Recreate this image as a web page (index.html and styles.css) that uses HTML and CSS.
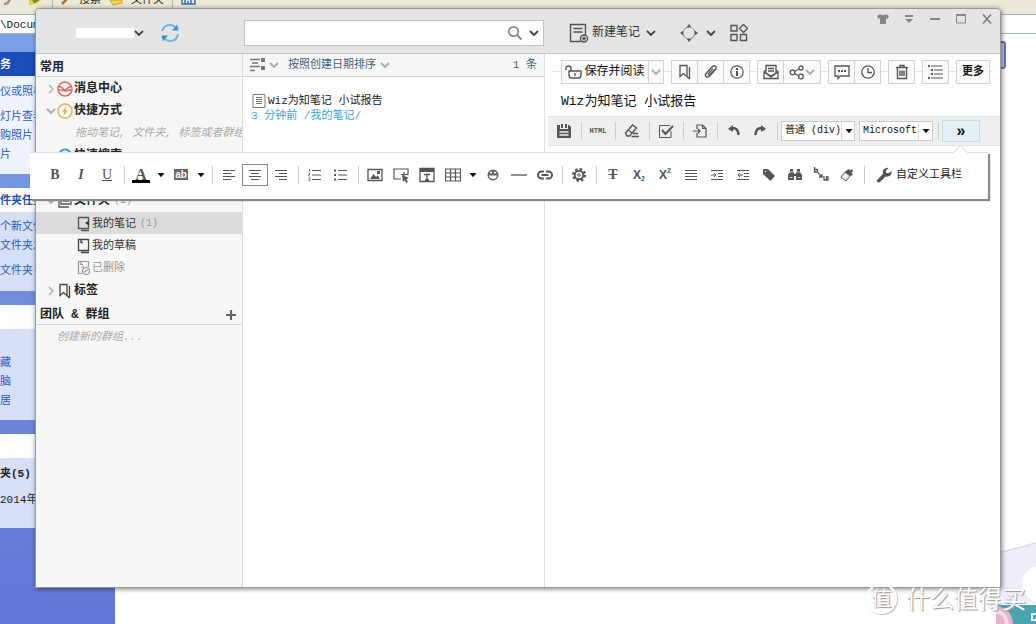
FILE: index.html
```html
<!DOCTYPE html>
<html lang="zh-CN">
<head>
<meta charset="utf-8">
<title>为知笔记</title>
<link rel="stylesheet" href="styles.css">
</head>
<body>
<svg class="defs" aria-hidden="true">
  <defs>
    <symbol id="chev" viewBox="0 0 10 10"><path d="M1 3l4 4 4-4" fill="none" stroke="currentColor" stroke-width="1.8"/></symbol>
    <symbol id="chev-r" viewBox="0 0 10 10"><path d="M3 1l4 4-4 4" fill="none" stroke="currentColor" stroke-width="1.4"/></symbol>
    <symbol id="caret" viewBox="0 0 8 8"><path d="M0.5 2h7L4 6.200z"/></symbol>
    <symbol id="bookmark" viewBox="0 0 16 16"><path d="M3 1.500h7v11L6.500 9.500 3 12.500zM12.500 3v12M10 12.500l2.500 2.500" fill="none" stroke="currentColor" stroke-width="1.300"/></symbol>
    <symbol id="list" viewBox="0 0 14 12"><path d="M4 1.500h9M4 6h9M4 10.500h9" stroke="currentColor"/><path d="M0 .500h2v2H0zM0 5h2v2H0zM0 9.500h2v2H0z"/></symbol>
    <symbol id="numlist" viewBox="0 0 14 12"><path d="M4 1.500h9M4 6h9M4 10.500h9" stroke="currentColor"/><path d="M1.500 0v3M.500 4.500h1.500L.500 7H2M.500 9H2v2.500H.500" fill="none" stroke="currentColor" stroke-width=".8"/></symbol>
  </defs>
</svg>

<div class="explorer">
  <div class="ex-tools">
    <svg width="16" height="14" viewBox="0 0 16 14"><path d="M0 4Q5 4 6 -2" fill="none" stroke="#999" stroke-width="2.500"/></svg>
    <svg width="16" height="14" viewBox="0 0 16 14"><path d="M1 0h13L4 5H1z" fill="#e8c83c"/><path d="M5 0l2 2 4-3" fill="none" stroke="#4c9a2c" stroke-width="2"/></svg>
    <i class="ex-sep"></i>
    <svg width="10" height="14" viewBox="0 0 10 14"><path d="M1 4l6-6" stroke="#b0714c" stroke-width="2.500"/></svg>
    <span>搜索</span>
    <svg width="14" height="14" viewBox="0 0 14 14"><path d="M1 0h12v3L4 5z" fill="#f2d65c" stroke="#c9a227"/></svg>
    <span>文件夹</span>
    <i class="ex-sep"></i>
    <svg width="16" height="14" viewBox="0 0 16 14"><path d="M1 -3h13v7H1zM4 0v4M7 1v3M10 0v4" fill="#e7f0ff" stroke="#3b6cc4" stroke-width="1.500"/></svg>
  </div>
  <div class="ex-address">\Documents</div>
  <div class="ex-main">
    <div class="pane">
      <section class="card first">
        <h2>务</h2>
        <div class="card-body"><a href="#">仪或照相</a><a href="#">灯片查看</a><a href="#">购照片</a><a href="#">片</a></div>
      </section>
      <section class="card tasks">
        <h2>件夹任务</h2>
        <div class="card-body"><a href="#">个新文件</a><a href="#">文件夹发</a><a href="#">文件夹</a></div>
      </section>
      <section class="card places">
        <h2></h2>
        <div class="card-body"><a href="#">藏</a><a href="#">脑</a><a href="#">居</a></div>
      </section>
      <section class="card details">
        <h2></h2>
        <div class="card-body"><b>夹(5)</b><span>2014年</span></div>
      </section>
    </div>
    <div class="wall">
      <i class="scroll-thumb"></i>
      <svg width="44" height="84" viewBox="0 0 44 84"><path d="M0 16Q20 12 44 4V64H12Q4 40 0 34z" fill="#eeeef8"/><path d="M0 14Q22 10 44 3" fill="none" stroke="#dcdde8" stroke-width="2"/><circle cx="48" cy="44" r="18" fill="#fff"/><path d="M4 65h40v19H4z" fill="#4aa5ae"/><path d="M4 66q16 2 17 18H4z" fill="#e6b3cd"/><path d="M4 71q10 2 11 13" fill="none" stroke="#f5dbe8" stroke-width="4"/><path d="M44 74h-4v6h4" fill="none" stroke="#e6ffff" stroke-width="2"/></svg>
    </div>
  </div>
</div>

<main class="window">
  <header class="titlebar">
    <div class="account">
      <i class="name-blank"></i>
      <button class="plain dark" aria-label="账户"><svg width="10" height="10"><use href="#chev"/></svg></button>
      <button class="plain sync" aria-label="同步"><svg width="20" height="20" viewBox="0 0 20 20"><path d="M2 8Q4 2 10 2q3 0 5 2M18 11q-1 7-8 7-3 0-5-2" fill="none" stroke="#6fb6e2" stroke-width="2"/><path d="M12 7.500h6.500L17 1.500zM8 12.500H1.500L3 18.500z" fill="#2f97d8"/></svg></button>
    </div>
    <div class="search">
      <input type="text" aria-label="搜索笔记">
      <svg width="16" height="16" viewBox="0 0 16 16"><circle cx="6.500" cy="6.500" r="4.700" fill="none" stroke="#888" stroke-width="1.700"/><path d="M10 10l4.500 4.500" stroke="#888" stroke-width="2"/></svg>
      <svg class="dark" width="10" height="10"><use href="#chev"/></svg>
    </div>
    <div class="actions">
      <button class="plain new"><svg width="20" height="20" viewBox="0 0 20 20" fill="none" stroke="#555" stroke-width="1.400"><path d="M12 18.500H1.500v-17h15V12M4.500 5.500h9M4.500 9h9"/><circle cx="15" cy="15.500" r="3.500"/><path d="M13 15.500h4M15 13.500v4"/></svg>新建笔记<svg class="dark" width="10" height="10"><use href="#chev"/></svg></button>
      <button class="plain move" aria-label="视图"><svg width="18" height="18" viewBox="0 0 18 18"><circle cx="9" cy="9" r="6" fill="none" stroke="#888" stroke-dasharray="5 4.420" stroke-dashoffset="-2.200"/><path d="M9 0l2.500 3.500h-5zM9 18l2.500-3.500h-5zM0 9l3.500-2.500v5zM18 9l-3.500-2.500v5z" fill="#555"/></svg><svg class="dark" width="10" height="10"><use href="#chev"/></svg></button>
      <button class="plain" aria-label="应用"><svg width="18" height="18" viewBox="0 0 18 18" fill="none" stroke="#555" stroke-width="1.400"><path d="M1 1.500h6V7H1zM1 10.500h6v6H1zM10.500 10.500h6v6h-6zM13.500 .500l4 4-4 4-4-4z"/></svg></button>
    </div>
    <div class="winctl">
      <button class="plain" aria-label="皮肤"><svg width="12" height="10" viewBox="0 0 12 10"><path d="M0 2l3-2q3 2 6 0l3 2-1.500 3L9 4v6H3V4L1.500 5z"/></svg></button>
      <button class="plain" aria-label="菜单"><svg width="12" height="10" viewBox="0 0 12 10"><path d="M2 1h8v2H2zM2 5h8L6 9z"/></svg></button>
      <button class="plain" aria-label="最小化"><svg width="12" height="10" viewBox="0 0 12 10"><path d="M1 4h10v2H1z"/></svg></button>
      <button class="plain" aria-label="最大化"><svg width="12" height="10" viewBox="0 0 12 10"><path d="M1.500 1h9v8h-9z" fill="none" stroke="#888"/><path d="M1 0h10v2H1z"/></svg></button>
      <button class="plain" aria-label="关闭"><svg width="12" height="10" viewBox="0 0 12 10"><path d="M2 .500l8 9M10 .500l-8 9" stroke="#888" stroke-width="1.800"/></svg></button>
    </div>
  </header>

  <div class="columns">
    <nav class="sidebar">
      <h3>常用</h3>
      <div class="group">
        <div class="row"><svg class="dim" width="10" height="10"><use href="#chev-r"/></svg><svg width="16" height="16" viewBox="0 0 16 16" fill="none" stroke="#e26a62" stroke-width="1.500"><circle cx="8" cy="8" r="7"/><path d="M1.500 5.500q3 0 6.500 4 3.500-4 6.500-4M2 9q3 0 6 1 3-1 6-1"/></svg><b>消息中心</b></div>
        <div class="row"><svg class="dim" width="10" height="10"><use href="#chev"/></svg><svg width="16" height="16" viewBox="0 0 16 16"><circle cx="8" cy="8" r="7" fill="none" stroke="#e4b04a" stroke-width="1.400"/><path d="M9.500 3.500L5 8.500h2.500l-1 4 4.500-5H8.500z" fill="#e4b04a"/></svg><b>快捷方式</b></div>
        <p class="hint deep">拖动笔记, 文件夹, 标签或者群组</p>
      </div>
      <div class="group">
        <div class="row"><svg class="dim" width="10" height="10"><use href="#chev-r"/></svg><svg width="16" height="16" viewBox="0 0 16 16"><circle cx="8" cy="8" r="6.500" fill="none" stroke="#3d9be0" stroke-width="2"/></svg><b>快速搜索</b></div>
        <div class="row"></div>
      </div>
      <div class="group">
        <div class="row"><svg class="dim" width="10" height="10"><use href="#chev"/></svg><svg width="16" height="16" viewBox="0 0 16 16" fill="none" stroke="#555" stroke-width="1.300"><path d="M4 2h10v9H4zM6 5h6M6 8h6M2 4v10h10"/></svg><b>文件夹</b><small>(1)</small></div>
      </div>
      <div class="group">
        <div class="row sub on"><svg width="14" height="16" viewBox="0 0 14 16" fill="none" stroke="#555" stroke-width="1.300"><path d="M1.500 1.500h10v11h-10zM4 14.500h8"/><path d="M8 7l4-2.500v5z" fill="#333" stroke="none"/></svg><span>我的笔记</span><small>(1)</small></div>
        <div class="row sub"><svg width="14" height="16" viewBox="0 0 14 16" fill="none" stroke="#444" stroke-width="1.300"><path d="M1.500 1.500h10v11h-10zM4 14.500h8M4 2v2.500h2"/></svg><span>我的草稿</span></div>
        <div class="row sub gone"><svg width="14" height="16" viewBox="0 0 14 16" fill="none" stroke="#999" stroke-width="1.200"><path d="M5 13.500H1.500v-12h10V7M4 2v2.500h2M4 7h3"/><circle cx="9" cy="11" r="3.500"/><path d="M7.500 12.500l3-3"/></svg><span>已删除</span></div>
      </div>
      <div class="row"><svg class="dim" width="10" height="10"><use href="#chev-r"/></svg><svg class="ink" width="16" height="16"><use href="#bookmark"/></svg><b>标签</b></div>
      <h3 class="teams">团队 &amp; 群组<button class="plain" aria-label="添加群组"><svg width="10" height="10" viewBox="0 0 10 10"><path d="M5 0v10M0 5h10" stroke="#666" stroke-width="2.200"/></svg></button></h3>
      <p class="hint">创建新的群组...</p>
    </nav>

    <section class="notes">
      <div class="sortbar">
        <svg width="16" height="14" viewBox="0 0 16 14"><path d="M0 1.500h10M2 5h6M0 8.500h10M0 12.500h5" stroke="#777" stroke-width="1.500"/><path d="M11 0h4v4h-4zM11 8h4v4h-4z" fill="#777"/></svg>
        <svg class="dim" width="10" height="10"><use href="#chev"/></svg>
        <button class="plain sort">按照创建日期排序<svg class="dim" width="10" height="10"><use href="#chev"/></svg></button>
        <span class="count">1 条</span>
      </div>
      <article class="note">
        <div class="note-title"><svg width="14" height="14" viewBox="0 0 14 14" fill="none" stroke="#777"><path d="M1 .500h12v13H1zM4 3.500h6M4 5.500h6M4 7.500h6M4 9.500h6"/></svg>Wiz为知笔记 小试报告</div>
        <div class="note-meta">3 分钟前 /我的笔记/</div>
      </article>
    </section>

    <section class="editor">
      <div class="cmdbar">
        <div class="set"><button class="save"><svg width="18" height="14" viewBox="0 0 18 14" fill="none" stroke="#555" stroke-width="1.400"><path d="M1 5V3.500Q1 1 3.500 1T6 3.500V6M4 6h12v4q0 3-3 3H7q-3 0-3-3zM10 8v3"/></svg>保存并阅读</button><button class="drop" aria-label="保存选项"><svg class="dim" width="10" height="10"><use href="#chev"/></svg></button></div>
        <div class="set"><button aria-label="标签"><svg width="16" height="16"><use href="#bookmark"/></svg></button><button aria-label="附件"><svg width="16" height="16" viewBox="0 0 16 16"><path d="M13 5l-6.500 7q-2 2-3.500.500t.500-3.500l6-6.500q1.500-1.500 3-.300t0 3L7 10.500q-1 .700-1.500 0T6 9l4-4" fill="none" stroke="currentColor" stroke-width="1.400"/></svg></button><button aria-label="信息"><svg width="16" height="16" viewBox="0 0 16 16"><circle cx="8" cy="8" r="6.200" fill="none" stroke="currentColor" stroke-width="1.200"/><path d="M7 4h2v2H7zM7 7h2v5H7z"/></svg></button></div>
        <div class="set"><button aria-label="邮件"><svg width="16" height="16" viewBox="0 0 16 16" fill="none" stroke="currentColor" stroke-width="1.300"><path d="M3 6L1 7.500v7h14v-7L13 6M3 9V1.500h10V9l-5 3zM1 8l7 5 7-5M5 4.500h6M5 7h6"/></svg></button><button class="share" aria-label="分享"><svg width="16" height="16" viewBox="0 0 16 16" fill="none" stroke="currentColor" stroke-width="1.300"><circle cx="3.500" cy="8.500" r="2.300"/><circle cx="12" cy="4" r="2"/><circle cx="12" cy="12.500" r="2.300"/><path d="M5.500 7.500L10 5M5.500 9.500L10 12"/></svg><svg class="dim" width="10" height="10"><use href="#chev"/></svg></button></div>
        <div class="set"><button aria-label="评论"><svg width="16" height="16" viewBox="0 0 16 16"><path d="M1 2h14v10H6.500L4 14.500V12H1z" fill="none" stroke="currentColor" stroke-width="1.300"/><path d="M4 6h2v2H4zM7 6h2v2H7zM10 6h2v2h-2z"/></svg></button><button aria-label="历史"><svg width="16" height="16" viewBox="0 0 16 16" fill="none" stroke="currentColor" stroke-width="1.300"><circle cx="8" cy="8" r="6.200"/><path d="M8 4v4.500h4"/></svg></button></div>
        <div class="set"><button aria-label="删除"><svg width="16" height="16" viewBox="0 0 16 16" fill="none" stroke="currentColor" stroke-width="1.400"><path d="M2 3.500h12M6 3V1.500h4V3M3.500 4v10.500h9V4M6 6.500v5.500M8 6.500v5.500M10 6.500v5.500"/></svg></button></div>
        <div class="set"><button aria-label="目录"><svg width="16" height="16" viewBox="0 0 16 16"><path d="M3 2h11M6 6h9M6 10h9M3 14h12" stroke="currentColor" stroke-width="1.200"/><path d="M0 1h2v2H0zM3 5h2v2H3zM3 9h2v2H3zM0 13h2v2H0z"/></svg></button></div>
        <div class="set"><button class="more">更多</button></div>
      </div>
      <h1>Wiz为知笔记 小试报告</h1>
      <div class="editbar">
        <button aria-label="保存"><svg width="14" height="14" viewBox="0 0 14 14"><path d="M0 1h3v4h8V1h1l2 2v11H0zM4 0h2v4H4zM8 0h2v4H8z"/><path d="M2.500 8h9M2.500 11h9" stroke="#eee" stroke-width="1.300"/></svg></button><i class="sep"></i>
        <button class="html">HTML</button><i class="sep"></i>
        <button aria-label="清除"><svg width="16" height="14" viewBox="0 0 16 14" fill="none" stroke="currentColor" stroke-width="1.400"><path d="M1.500 9l7-8 4 3-7 8H3zM4 6l4 3M9 9.500h5M7.500 12.500H15"/></svg></button><i class="sep"></i>
        <button aria-label="待办"><svg width="16" height="14" viewBox="0 0 16 14" fill="none" stroke="currentColor"><path d="M13 7v6.500H1.500v-12H12"/><path d="M4 6l3.500 4L15 2" stroke-width="2"/></svg></button><i class="sep"></i>
        <button aria-label="插入文件"><svg width="16" height="14" viewBox="0 0 16 14" fill="none" stroke="currentColor" stroke-width="1.200"><path d="M5 5V1h5.500L14 4.500V13H5V9M10.500 1v3.500H14M1 7h7M6 5l2 2-2 2"/></svg></button><i class="sep"></i>
        <button aria-label="撤销"><svg width="14" height="14" viewBox="0 0 14 14"><path d="M3 5q8-3 8.500 6" fill="none" stroke="currentColor" stroke-width="2.400"/><path d="M1 5l5-4v7z"/></svg></button><button aria-label="重做"><svg width="14" height="14" viewBox="0 0 14 14"><path d="M11 5Q3 2 2.500 11" fill="none" stroke="currentColor" stroke-width="2.400"/><path d="M13 5L8 1v7z"/></svg></button><i class="sep"></i>
        <label class="pick"><select aria-label="段落格式"><option>普通 (div)</option></select><svg width="8" height="8"><use href="#caret"/></svg></label>
        <label class="pick"><select aria-label="字体"><option>Microsoft</option></select><svg width="8" height="8"><use href="#caret"/></svg></label><i class="sep"></i>
        <button class="expand">»</button>
      </div>
      <div class="paper"></div>
    </section>
  </div>

  <div class="popbar">
    <button class="serif">B</button><button class="serif it">I</button><button class="serif un">U</button><i class="sep"></i>
    <button class="serif color">A</button><button class="arrow" aria-label="文字颜色"><svg width="8" height="8"><use href="#caret"/></svg></button>
    <button class="mark"><span>ab</span></button><button class="arrow" aria-label="背景颜色"><svg width="8" height="8"><use href="#caret"/></svg></button><i class="sep"></i>
    <button aria-label="左对齐"><svg width="12" height="12" viewBox="0 0 12 12"><path d="M0 1.500h12M0 4.500h8M0 7.500h12M0 10.500h8" stroke="currentColor"/></svg></button><button class="active" aria-label="居中"><svg width="12" height="12" viewBox="0 0 12 12"><path d="M0 1.500h12M2 4.500h8M0 7.500h12M2 10.500h8" stroke="currentColor"/></svg></button><button aria-label="右对齐"><svg width="12" height="12" viewBox="0 0 12 12"><path d="M0 1.500h12M4 4.500h8M0 7.500h12M4 10.500h8" stroke="currentColor"/></svg></button><i class="sep"></i>
    <button aria-label="编号"><svg width="14" height="12"><use href="#numlist"/></svg></button><button aria-label="项目符号"><svg width="14" height="12"><use href="#list"/></svg></button><i class="sep"></i>
    <button aria-label="图片"><svg width="16" height="14" viewBox="0 0 16 14"><path d="M1 1.500h14v11H1z" fill="none" stroke="currentColor" stroke-width="1.300"/><path d="M3 11l3.500-5L9 9l1.500-1.500L13 11zM10 3h3v3h-3z"/></svg></button><button aria-label="截图"><svg width="16" height="16" viewBox="0 0 16 16"><path d="M8 12H1V2h14v6M8 7.500h7M11 5v6" fill="none" stroke="currentColor" stroke-width="1.200"/><path d="M9 8l7 3-2.500 1 1.500 3-2 .700-1.200-2.700L10 15z"/></svg></button><button aria-label="文本框"><svg width="16" height="16" viewBox="0 0 16 16"><path d="M1 1.500h14v13H1zM5 7.500h6M8 7.500v6M6 13h4" fill="none" stroke="currentColor" stroke-width="1.300"/><path d="M1 1h14v4H1z"/></svg></button><button aria-label="表格"><svg width="16" height="14" viewBox="0 0 16 14"><path d="M.500 1h15v12H.500zM.500 5h15M.500 9h15M5.500 1v12M10.500 1v12" fill="none" stroke="currentColor" stroke-width="1.200"/></svg></button><button class="arrow" aria-label="表格选项"><svg width="8" height="8"><use href="#caret"/></svg></button>
    <button aria-label="表情"><svg width="14" height="14" viewBox="0 0 14 14"><circle cx="7" cy="7" r="5.500" fill="#666"/><path d="M3 7.500h8Q10.500 11 7 11T3 7.500z" fill="#fff"/><path d="M4 4.500h2M8 4.500h2" stroke="#fff" stroke-width="1.300"/></svg></button><button aria-label="分割线"><svg width="16" height="12" viewBox="0 0 16 12"><path d="M0 6h16" stroke="currentColor" stroke-width="1.300"/></svg></button><button aria-label="链接"><svg width="16" height="12" viewBox="0 0 16 12" fill="none" stroke="currentColor" stroke-width="2"><path d="M7 2.500H4.500a3.500 3.500 0 000 7H7M9 2.500h2.500a3.500 3.500 0 010 7H9M4.500 6h7"/></svg></button><i class="sep"></i>
    <button aria-label="设置"><svg width="14" height="14" viewBox="0 0 14 14" fill="none" stroke="currentColor"><circle cx="7" cy="7" r="4.300" stroke-width="2"/><circle cx="7" cy="7" r="6" stroke-width="2" stroke-dasharray="2.350 2.360"/><circle cx="7" cy="7" r="1.300"/></svg></button><i class="sep"></i>
    <button class="serif strike" aria-label="删除线"><s>T</s></button><button class="script">X<sub>2</sub></button><button class="script">X<sup>2</sup></button>
    <button aria-label="两端对齐"><svg width="12" height="12" viewBox="0 0 12 12"><path d="M0 1.500h12M0 4.500h12M0 7.500h12M0 10.500h12" stroke="currentColor"/></svg></button><button aria-label="增加缩进"><svg width="12" height="12" viewBox="0 0 12 12"><path d="M0 1.500h12M7 4.500h5M7 7.500h5M0 10.500h12M0 6h5M3 4l2 2-2 2" fill="none" stroke="currentColor"/></svg></button><button aria-label="减少缩进"><svg width="12" height="12" viewBox="0 0 12 12"><path d="M0 1.500h12M7 4.500h5M7 7.500h5M0 10.500h12M1 6h5M3 4L1 6l2 2" fill="none" stroke="currentColor"/></svg></button><button aria-label="标签"><svg width="14" height="12" viewBox="0 0 14 12"><path d="M1 0h5l7 7-4.500 5L1 5z"/><circle cx="3.500" cy="2.500" r=".8" fill="#fff"/></svg></button><button aria-label="查找"><svg width="14" height="12" viewBox="0 0 14 12"><path d="M2 0h3v3h1v2h2V3h1V0h3v3l2 3v5H8V7H6v4H0V6l2-3z"/><path d="M1.500 8.500h3M9.500 8.500h3M2 3h3M9 3h3" stroke="#fff" stroke-width=".7"/></svg></button><button aria-label="替换"><svg width="16" height="16" viewBox="0 0 16 16" fill="none" stroke="currentColor" stroke-width="1.300"><path d="M1.500 0v5h3V2.500h-3M5 6l4 4M9 7v3H6M11 9v4h2.500V9M15 9v5"/></svg></button><button aria-label="格式刷"><svg width="14" height="14" viewBox="0 0 14 14"><path d="M7 2l2-1 1 1.500L12 1l1 2-1.500 2L13 7l-3 1-5-4z"/><path d="M5 4l5 4-4 5-5-4z" fill="#eee" stroke="currentColor"/></svg></button><i class="sep"></i>
    <button class="custom"><svg width="16" height="16" viewBox="0 0 16 16"><path d="M1 13l6-6q-1-4 2-5.500 2-1 3.500-.500L10 3.500v2.500h3L15.500 4q.500 5-4 5.500-1 .300-2 0L4 15q-1.500 1-3-.500-.500-1 0-1.500z"/></svg>自定义工具栏</button>
  </div>
</main>

<div class="watermark"><span class="seal">值</span><span>什么值得买</span></div>
</body>
</html>
```
FILE: styles.css
```css
* { box-sizing: border-box; }
html, body { height: 100%; }
body {
  margin: 0;
  position: relative;
  overflow: hidden;
  font: 11px/14px "Liberation Mono", "Noto Sans CJK SC", monospace;
  color: #222;
  background: #fff;
}
h1, h2, h3, p { margin: 0; }
svg { display: block; flex: none; }
svg:not([fill]) { fill: currentColor; }
.defs { position: absolute; width: 0; height: 0; }
button, input, select { font: inherit; color: inherit; margin: 0; padding: 0; }
button {
  border: 0;
  background: none;
  display: flex;
  align-items: center;
  justify-content: center;
  color: #555;
  white-space: nowrap;
}
i { display: block; flex: none; }
.dark { color: #444; }
.dim { color: #aaa; }
.ink { color: #444; }

/* file manager behind the window */
.explorer { height: 100%; display: flex; flex-direction: column; font-size: 11px; }
.ex-tools {
  height: 14px;
  flex: none;
  display: flex;
  gap: 8px;
  padding-left: 4px;
  overflow: hidden;
  background: #ece9d8;
  line-height: 0;
}
.ex-sep { width: 1px; background: #bbb8a8; }
.ex-address {
  height: 20px;
  flex: none;
  border: solid #a5b6cc;
  border-width: 1px 0;
  line-height: 20px;
  background: #fff;
}
.ex-main { flex: 1; display: flex; min-height: 0; }
.pane {
  width: 115px;
  flex: none;
  padding-top: 18px;
  background: linear-gradient(#7ba2e7, #6375d6);
  overflow: hidden;
  white-space: nowrap;
}
.card { margin: 0 12px 14px 0; }
.card h2 {
  height: 24px;
  font-size: 11px;
  line-height: 26px;
  color: #1c50b8;
  background: linear-gradient(90deg, #fff, #eef2fd);
}
.first h2 { color: #fff; background: #1a4dba; }
.card-body {
  display: flex;
  flex-direction: column;
  background: #d8e0f8;
}
.card-body a { color: #2a5bc4; text-decoration: none; }
.first .card-body { height: 98px; padding-top: 9px; background: #eff3ff; gap: 5px; }
.first a:first-child { margin-bottom: 6px; }
.tasks .card-body { height: 79px; padding-top: 8px; gap: 5px; }
.tasks a:last-child { margin-top: 6px; }
.places .card-body { height: 91px; padding-top: 27px; gap: 5px; }
.details .card-body { height: 70px; padding-top: 9px; gap: 12px; }
.wall { flex: 1; display: flex; flex-direction: column; align-items: flex-end; justify-content: space-between; }
.scroll-thumb {
  width: 8px;
  height: 28px;
  margin: 7px 30px 0 0;
  border: 2px solid #5f78bb;
  border-radius: 3px;
  background: #b4c7f0;
}

/* note window */
.window {
  position: absolute;
  left: 36px;
  right: 36px;
  top: 9px;
  bottom: 37px;
  display: flex;
  flex-direction: column;
  border-radius: 4px 4px 0 0;
  background: #fff;
  box-shadow: 0 0 0 1px #999, 1px 1px 5px 1px rgba(0, 0, 0, .5);
}
.titlebar {
  height: 45px;
  flex: none;
  display: grid;
  grid-template-columns: 208px 300px 1fr auto;
  align-items: center;
  padding-top: 3px;
  border-bottom: 1px solid #c4c4c4;
  border-radius: 4px 4px 0 0;
  background: #e5e5e5;
}
.account { display: flex; align-items: center; padding-left: 40px; }
.name-blank { width: 58px; height: 10px; background: #fff; }
.sync { margin-left: 16px; }
.search {
  height: 26px;
  display: flex;
  align-items: center;
  gap: 6px;
  padding-right: 4px;
  border: 1px solid #c2c2c2;
  background: #fff;
}
.search input { flex: 1; min-width: 0; border: 0; outline: 0; padding: 0 6px; }
.actions { display: flex; align-items: center; padding-left: 25px; }
.new { gap: 3px; color: #333; font-size: 12px; }
.new .dark { margin-left: 3px; }
.move { gap: 8px; margin: 0 14px 0 24px; }
.winctl { align-self: start; display: flex; }
.winctl button { width: 26px; height: 14px; color: #888; }

.columns { flex: 1; min-height: 0; display: grid; grid-template-columns: 207px 302px 1fr; }

/* folder tree */
.sidebar { min-width: 0; overflow: hidden; border-right: 1px solid #ddd; background: #f7f7f7; }
.sidebar h3 {
  height: 23px;
  display: flex;
  align-items: center;
  padding: 5px 0 0 4px;
  border-bottom: 1px solid #d5d5d5;
  font-size: 12px;
}
.group { padding-bottom: 1px; }
.row { height: 22px; display: flex; align-items: center; padding: 1px 0 0 10px; white-space: nowrap; }
.row .dim { margin-right: 1px; }
.row b { font-size: 12px; margin-left: 1px; }
.row small { font-size: 10px; color: #999; margin-left: 4px; }
.sidebar .sub { padding-left: 41px; color: #333; }
.sub span { margin-left: 1px; }
.on { background: #dcdcdc; }
.sidebar .gone { color: #999; }
.hint { height: 22px; padding-left: 21px; line-height: 24px; font-style: italic; color: #aaa; white-space: nowrap; }
.deep { padding-left: 39px; }
.sidebar .teams { justify-content: space-between; height: 24px; padding-right: 6px; }

/* note list */
.notes { min-width: 0; border-right: 1px solid #ddd; }
.sortbar {
  height: 23px;
  display: flex;
  align-items: center;
  gap: 3px;
  padding: 0 7px;
  border-bottom: 1px solid #d5d5d5;
  background: #f7f7f7;
}
.sort { margin-left: 6px; gap: 4px; color: #4b5f7c; }
.count { margin-left: auto; color: #4b5f7c; }
.note { padding: 17px 8px; }
.note-title { display: flex; align-items: center; gap: 2px; padding-left: 1px; }
.note-meta { color: #3aa5dc; line-height: 16px; }

/* editor */
.editor { min-width: 0; display: flex; flex-direction: column; }
.cmdbar {
  height: 35px;
  display: flex;
  align-items: center;
  gap: 7px;
  padding: 0 8px 0 16px;
  background: linear-gradient(#e4e4e4, #e4e4e4) center / calc(100% - 16px) 1px no-repeat;
}
.set { display: flex; height: 24px; border: 1px solid #d2d2d2; background: #fafafa; }
.set button { width: 25px; }
.set button + button { border-left: 1px solid #d2d2d2; width: 26px; }
.set .save { width: 86px; gap: 1px; color: #111; font-size: 12px; }
.set .save + .drop { width: 15px; }
.set .share.share { width: 37px; }
.set .more { width: 32px; color: #111; font-weight: bold; }
.editor h1 { height: 27px; padding-left: 16px; font-size: 13px; font-weight: normal; line-height: 26px; color: #111; }
.editbar {
  height: 30px;
  display: flex;
  align-items: center;
  margin-left: 3px;
  padding-left: 3px;
  border-top: 1px solid #e2e2e2;
  border-bottom: 1px solid #e2e2e2;
  background: #efefef;
}
.editbar button, .popbar button { width: 26px; height: 22px; flex: none; }
.sep { width: 8px; height: 18px; background: linear-gradient(#ccc, #ccc) center / 1px 100% no-repeat; }
.editbar .html { font: bold 7px/10px "Liberation Mono", monospace; }
.pick {
  width: 74px;
  height: 20px;
  flex: none;
  display: flex;
  align-items: center;
  margin-right: 4px;
  padding-right: 3px;
  border: 1px solid #ccc;
  background: #fff;
  color: #111;
}
.pick select {
  width: 60px;
  height: 18px;
  padding-left: 3px;
  margin-right: 3px;
  border: 0;
  border-right: 1px solid #ddd;
  appearance: none;
  background: none;
  font-size: 10px;
}
.pick + .pick { margin-right: 1px; }
.editbar .expand {
  width: 38px;
  border: 1px solid #c9dbe5;
  background: #e6eff5;
  color: #111;
  font: bold 16px/16px "Liberation Sans", sans-serif;
}
.paper { flex: 1; }

/* overflow toolbar */
.popbar {
  position: absolute;
  left: -6px;
  right: 12px;
  top: 143px;
  height: 47px;
  display: flex;
  align-items: center;
  padding: 0 0 3px 12px;
  border-top: 1px solid #ddd;
  background: #fff;
  box-shadow: 2px 2px 1px #888;
}
.popbar::before {
  content: "";
  position: absolute;
  right: 22px;
  top: -6px;
  width: 10px;
  height: 10px;
  border: solid #ddd;
  border-width: 1px 0 0 1px;
  background: #fff;
  transform: rotate(45deg);
}
.popbar .arrow { width: 14px; color: #111; }
.popbar .serif { font: bold 14px/16px "Liberation Serif", serif; }
.popbar .it { font-style: italic; }
.popbar .un { text-decoration: underline; font-weight: normal; }
.popbar .color {
  font-size: 16px;
  background: linear-gradient(#000, #000) center bottom 3px / 18px 3px no-repeat;
}
.mark span {
  padding: 0 1px;
  background: #666;
  color: #fff;
  font: bold 10px/11px "Liberation Sans", sans-serif;
}
.popbar .active { border: 1px solid #888; }
.popbar .script { font: bold 12px/14px "Liberation Sans", sans-serif; }
.script sub, .script sup { font-size: 7px; line-height: 8px; }
.script sub { align-self: flex-end; padding-bottom: 3px; }
.script sup { align-self: flex-start; padding-top: 3px; }
.popbar .custom { width: auto; gap: 4px; padding-left: 8px; color: #222; }
.custom svg { color: #555; }

.watermark {
  position: absolute;
  right: 10px;
  bottom: 10px;
  display: flex;
  align-items: center;
  gap: 9px;
  color: #fff;
  font: 24px/32px "Noto Sans CJK SC", sans-serif;
  text-shadow: 1px 1px 1px #999, 0 0 1px #bbb;
}
.seal {
  width: 31px;
  height: 31px;
  border: 2px solid #fff;
  border-radius: 50%;
  font-size: 20px;
  line-height: 26px;
  text-align: center;
  box-shadow: 1px 1px 1px #bbb;
}
```
